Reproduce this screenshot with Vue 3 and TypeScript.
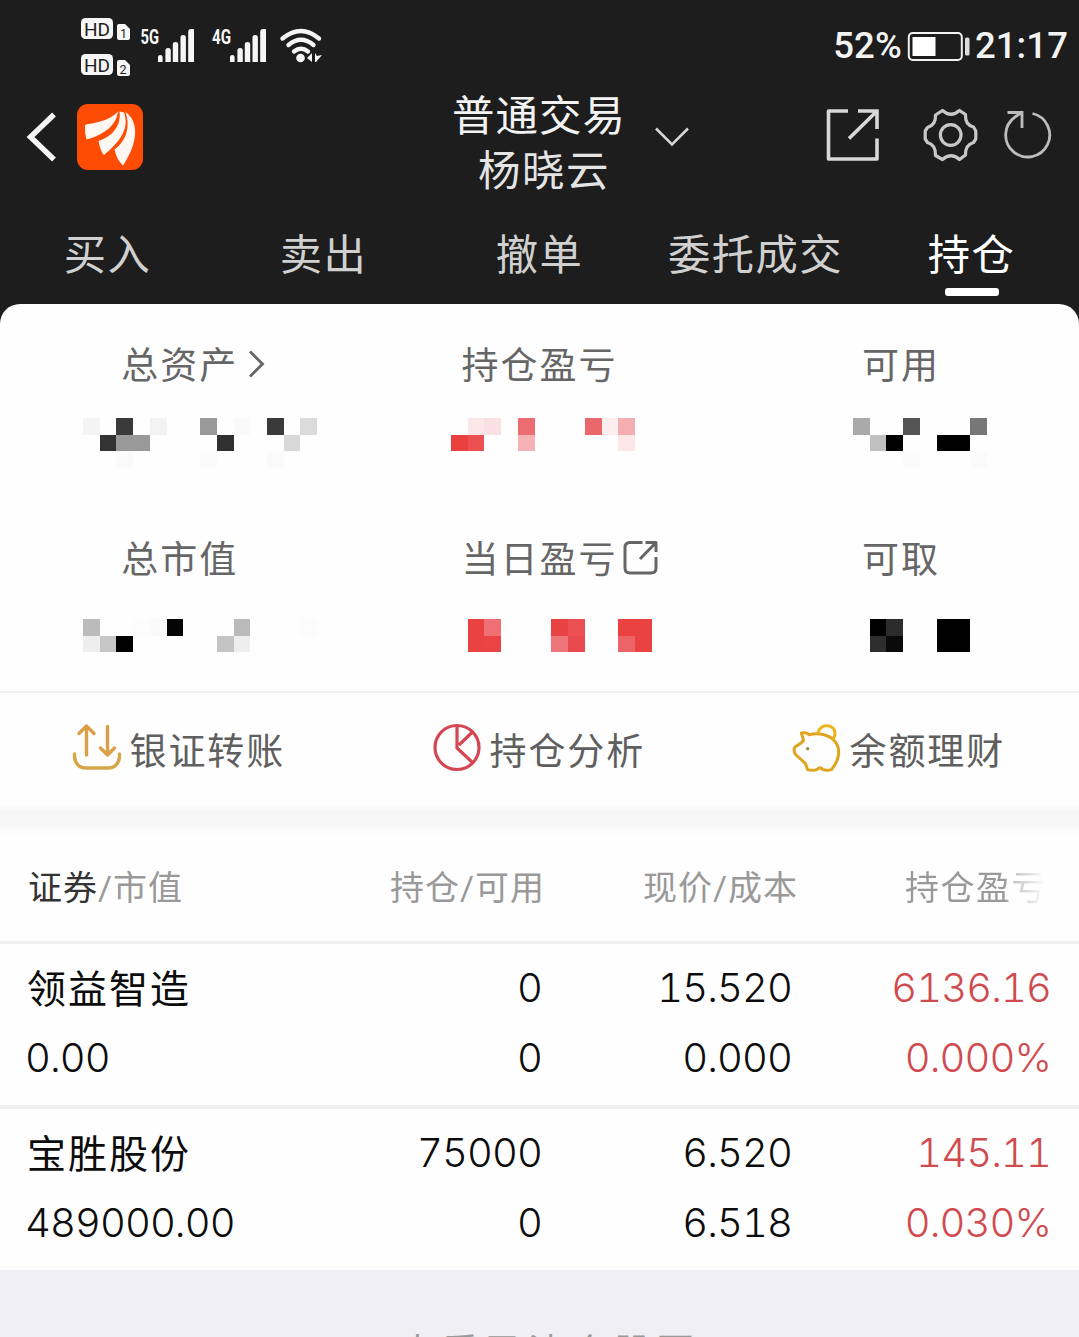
<script setup lang="ts">
interface Cell { x: number; y: number; c: string }
interface Metric { label: string; icon?: 'chevron' | 'share'; cells: Cell[] }
interface Holding { name: string; value: string; held: string; available: string; price: string; cost: string; profit: string; rate: string }

const cells = (spec: string): Cell[] =>
  spec.split(' ').map((item) => {
    const [x, y, c] = item.split(',')
    return { x: Number(x), y: Number(y), c: '#' + c }
  })

const tabs: string[] = ['买入', '卖出', '撤单', '委托成交', '持仓']

const metrics: Metric[] = [
  { label: '总资产', icon: 'chevron', cells: cells('0,0,f4f4f4 2,0,3a3a3a 4,0,f3f3f3 7,0,999999 9,0,fafafa 11,0,3a3a3a 13,0,dbdbdb 1,1,333333 2,1,999999 3,1,999999 8,1,303030 12,1,d8d8d8 2,2,fbfbfb 7,2,fbfbfb 11,2,fbfbfb') },
  { label: '持仓盈亏', cells: cells('1,0,fbe6e8 2,0,fae0e3 4,0,ec6d71 8,0,ea676b 9,0,feeeee 10,0,f4aeb2 0,1,ea4040 1,1,ed5052 4,1,f4b2b4 10,1,fde6e6') },
  { label: '可用', cells: cells('0,0,aaaaaa 3,0,555555 7,0,777777 1,1,c0c0c0 2,1,000000 5,1,000000 6,1,000000 3,2,fbfbfb 7,2,fbfbfb') },
  { label: '总市值', cells: cells('0,0,bbbbbb 3,0,fcfcfc 4,0,fafafa 5,0,050505 9,0,bababa 13,0,fcfcfc 0,1,eeeeee 1,1,c6c6c6 2,1,000000 8,1,c4c4c4 9,1,eeeeee') },
  { label: '当日盈亏', icon: 'share', cells: cells('1,0,ea4141 2,0,ee7075 6,0,e84242 7,0,ec5053 10,0,ea4141 11,0,ea4141 1,1,ea4141 2,1,ea4343 6,1,ed757a 7,1,ea4a4f 10,1,ec6468 11,1,ea4141') },
  { label: '可取', cells: cells('1,0,000000 2,0,2c2c2c 5,0,000000 6,0,000000 1,1,2e2e2e 2,1,0a0a0a 5,1,000000 6,1,000000') },
]

const holdings: Holding[] = [
  { name: '领益智造', value: '0.00', held: '0', available: '0', price: '15.520', cost: '0.000', profit: '6136.16', rate: '0.000%' },
  { name: '宝胜股份', value: '489000.00', held: '75000', available: '0', price: '6.520', cost: '6.518', profit: '145.11', rate: '0.030%' },
]
</script>

<template>
  <div class="screen">
    <header class="top">
      <div class="status">
        <svg class="status-left" width="250" height="70" viewBox="78 12 250 70">
          <g fill="#f6f6f6">
            <rect x="81" y="18" width="32" height="21" rx="4.5" />
            <rect x="81" y="54" width="32" height="21" rx="4.5" />
            <path d="M119 24h6l5 5v9q0 2-2 2h-9q-2 0-2-2V26q0-2 2-2z" />
            <path d="M119 60h6l5 5v9q0 2-2 2h-9q-2 0-2-2V62q0-2 2-2z" />
            <path d="M158 57q0-2 2.300-2t2.300 2v5H158zM165.400 50q0-2 2.700-2t2.700 2v12h-5.400zM172.800 44q0-2 2.700-2t2.700 2v18h-5.400zM180.500 37q0-2 2.700-2t2.700 2v25h-5.400zM188.200 32q0-3 3-3h2.800v33h-5.800z" />
            <path d="M230 57q0-2 2.300-2t2.300 2v5H230zM237.400 50q0-2 2.700-2t2.700 2v12h-5.400zM244.800 44q0-2 2.700-2t2.700 2v18h-5.400zM252.500 37q0-2 2.700-2t2.700 2v25h-5.400zM260.200 32q0-3 3-3h2.800v33h-5.800z" />
            <circle cx="300.500" cy="58" r="4.300" />
            <path d="M312 53v9l-5-4zM315 62V53l2 3 5-1-6 7z" />
          </g>
          <g fill="none" stroke="#f6f6f6" stroke-width="4.400" stroke-linecap="round">
            <path d="M282.500 38.500Q301 23.500 319 38.500" />
            <path d="M288.500 45Q301 34.500 313.500 45" />
            <path d="M294 51.500Q301 46 308 51.500" />
          </g>
          <g class="badge-text">
            <text x="84" y="35.500" font-size="19" textLength="26">HD</text>
            <text x="84" y="71.500" font-size="19" textLength="26">HD</text>
            <text x="120" y="37.500" font-size="12.500">1</text>
            <text x="119.500" y="73.500" font-size="12.500">2</text>
          </g>
          <g class="net-text">
            <text x="140.500" y="43.500" textLength="18.500" lengthAdjust="spacingAndGlyphs">5G</text>
            <text x="212" y="43.500" textLength="19" lengthAdjust="spacingAndGlyphs">4G</text>
          </g>
        </svg>
        <div class="status-right">
          <span>52%</span>
          <svg class="battery" width="64" height="32" viewBox="907 31 64 32">
            <rect x="908.800" y="33" width="53" height="27" rx="4" fill="none" stroke="#f2f2f2" stroke-width="2" />
            <rect x="912.500" y="37" width="23" height="19" fill="#fff" />
            <rect x="965" y="37.500" width="4.500" height="18" rx="1.500" fill="#ddd" />
          </svg>
          <span>21:17</span>
        </div>
      </div>

      <div class="bar">
        <div class="bar-left">
          <svg width="32" height="52" viewBox="26 110.500 32 52" fill="none" stroke="#f5f5f5" stroke-width="5.400">
            <path d="M54 114L30.500 136.500 54 159" />
          </svg>
          <svg width="67" height="67" viewBox="76.500 103.500 67 67">
            <rect x="76.500" y="103.500" width="66" height="66" rx="11" fill="#fe4c05" />
            <g fill="#fff8f2">
              <path d="M84.500 125Q85 123.500 88 123.500C101 121.500 111 118 117.500 111C116 124 105 134 86 139Q84 132 84.500 125z" />
              <path d="M119 111L123.500 112C129 127 121 140 103.500 154.500Q100 151 98 140.500C112 136 121 125 119 111z" />
              <path d="M125 111.500C132 116 135.500 125 134.500 135C133 148 127 158 122.500 165Q116 159 114 149C125 141 130.500 127 125 111.500z" />
            </g>
          </svg>
        </div>
        <div class="account">
          <div class="titles"><span>普通交易</span><span class="user">杨晓云</span></div>
        </div>
        <div class="bar-right">
          <svg class="down" width="36" height="22" viewBox="654 125 36 22" fill="none" stroke="#d5d5d5" stroke-width="2.600"><path d="M656 127.500L672 143.500 688 127.500" /></svg>
          <svg width="56" height="56" viewBox="825 107 56 56" fill="none" stroke="#d8d8d8" stroke-width="3.600">
            <path d="M848 111H828.500V159H877V138.500" stroke-linejoin="round" /><path d="M858 111H877V129M876 112L849 138.500" />
          </svg>
          <svg class="gear" width="56" height="56" viewBox="922 106 56 56" fill="none" stroke="#c8c8c8" stroke-width="3.200" stroke-linejoin="round">
            <path d="M942.500 109.500Q951 117 959.500 109.500L965.500 113.500Q965 124 973.500 126L975.800 130V138L973.500 141.500Q965 144 965.500 154L959.500 158.500Q951 151 942.500 158.500L935.500 154.500Q936 144 927.500 141.500L925.200 138V130L927.500 126.500Q936 124 935.500 114z" />
            <circle cx="950.700" cy="134" r="10.300" />
          </svg>
          <svg width="50" height="52" viewBox="1003 108 50 52" fill="none" stroke="#bdbdbd" stroke-width="2.800">
            <path d="M1032.500 112.500A22 22 0 1 1 1015 116L1021 112" /><path d="M1007.500 111.500H1022V127" />
          </svg>
        </div>
      </div>

      <nav class="tabs">
        <div v-for="(t, i) in tabs" :key="t" class="tab" :class="{ active: i === 4 }">{{ t }}</div>
      </nav>
    </header>

    <section class="panel">
      <div class="metrics">
        <div v-for="m in metrics" :key="m.label" class="metric">
          <div class="label">
            <span>{{ m.label }}</span>
            <svg v-if="m.icon === 'chevron'" class="chev" width="18" height="30" viewBox="0 0 18 30"><path d="M2 2.500L14.500 15 2 27.500" /></svg>
            <svg v-if="m.icon === 'share'" class="share" width="36" height="36" viewBox="0 0 36 36"><path d="M19.500 2.500H7Q2 2.500 2 7.500V28Q2 33 7 33H28Q33 33 33 28V17M22.500 2.500H33V12M32.500 3L17 19" /></svg>
          </div>
          <svg class="mosaic" width="250.950" height="50.190" viewBox="0 0 15 3" shape-rendering="crispEdges">
            <rect v-for="(c, i) in m.cells" :key="i" :x="c.x" :y="c.y" width="1" height="1" :fill="c.c" />
          </svg>
        </div>
      </div>
      <div class="actions">
        <div class="action">
          <svg width="52" height="52" viewBox="71 722 52 52" fill="none" stroke="#dba047" stroke-width="3.400" stroke-linecap="round" stroke-linejoin="round">
            <path d="M86.500 755V726M79 733.500L86.500 726 94 733.500M107.500 726.500V754M100.500 748L107.500 755 114.500 748" />
            <path d="M74.500 754V757Q76 768 86 768H108Q118 768 119.500 757V754" stroke="#d6a648" />
          </svg><span>银证转账</span>
        </div>
        <div class="action">
          <svg width="52" height="52" viewBox="431 722 52 52" fill="none" stroke="#d44752" stroke-width="3.200">
            <circle cx="457" cy="747.500" r="22" /><path d="M457 725.500V748L473 763M459 745L473 731.500" />
          </svg><span>持仓分析</span>
        </div>
        <div class="action">
          <svg width="52" height="52" viewBox="303 125 156 156" fill="none" stroke="#dfa51f" stroke-width="9" stroke-linejoin="round" stroke-linecap="round">
            <path d="M334 158Q350 155 357 163C385 157 416 162 433 181C456 207 446 242 424 268Q410 272 397 267Q390 257 382 267Q368 272 353 268L346 249L318 224Q308 212 315 200L333 188L341 180z" />
            <path d="M384 157Q391 135 411 136C434 137 440 158 431 174" stroke="#edb51b" /><circle cx="353" cy="205" r="3" fill="#8f9440" stroke="#8f9440" stroke-width="4" />
          </svg><span>余额理财</span>
        </div>
      </div>
    </section>

    <div class="band"></div>

    <section class="table">
      <div class="thead">
        <div class="first"><b>证券</b>/市值</div>
        <div>持仓/可用</div>
        <div>现价/成本</div>
        <div class="faded">持仓盈亏</div>
      </div>
      <div v-for="h in holdings" :key="h.name" class="row">
        <div class="line">
          <span class="name">{{ h.name }}</span><span>{{ h.held }}</span><span>{{ h.price }}</span><span class="up">{{ h.profit }}</span>
        </div>
        <div class="line">
          <span>{{ h.value }}</span><span>{{ h.available }}</span><span>{{ h.cost }}</span><span class="up">{{ h.rate }}</span>
        </div>
      </div>
    </section>
    <footer class="foot"><span>查看已清仓股票</span></footer>
  </div>
</template>

<style>
body { overflow: hidden; }
</style>

<style scoped>
.screen { width: 1079px; height: 1337px; overflow: hidden; display: flex; flex-direction: column; background: #1d1d1d; font-family: Roboto, "Noto Sans CJK SC", sans-serif; }
.top { height: 304px; flex: none; color: #f3f3f3; }
.status { height: 82px; display: flex; justify-content: space-between; padding: 12px 11px 0 78px; box-sizing: border-box; }
.status-left { flex: none; }
.badge-text { fill: #1d1d1d; font-family: Roboto, sans-serif; }
.net-text { fill: #f6f6f6; font: 700 20px Roboto, sans-serif; }
.status-right { display: flex; align-items: center; height: 67px; font-size: 36.500px; font-weight: 500; letter-spacing: 0.100px; }
.battery { margin: 2px 4px 0 5px; }
.bar { height: 128px; display: grid; grid-template-columns: 400px 278px 1fr; }
.bar-left { display: flex; align-items: center; gap: 18.500px; padding: 0 0 18px 26px; }
.account { display: flex; justify-content: center; }
.titles { display: flex; flex-direction: column; align-items: center; font-size: 42.500px; letter-spacing: 1px; line-height: 56px; padding-top: 7px; }
.user { color: #e4e4e4; margin: -1px 0 0 10px; letter-spacing: 1.500px; }
.bar-right { display: flex; align-items: center; padding-bottom: 22px; margin-left: -24px; }
.bar-right svg { flex: none; }
.down { margin: 4px 135px 0 0; }
.gear { margin: 0 25px 0 41px; }
.tabs { display: grid; grid-template-columns: repeat(5, 216px); height: 94px; margin-left: -1px; }
.tab { display: flex; flex-direction: column; align-items: center; font-size: 42.300px; letter-spacing: 1.500px; line-height: 91px; height: 94px; padding-left: 1px; color: #d0d0d0; }
.tab.active { color: #fff; }
.tab.active::after { content: ""; width: 54px; height: 8px; border-radius: 3px; background: #fff; margin-top: -13px; flex: none; }
.panel { height: 501px; flex: none; background: #fefefe; border-radius: 20px 20px 0 0; }
.metrics { height: 389px; box-sizing: border-box; display: grid; grid-template-columns: 368.100px 401.500px 1fr; grid-template-rows: 200.800px 1fr; padding: 34px 0 0 83.300px; border-bottom: 2px solid #f1f1f1; }
.metric:nth-child(3n + 1) .label { margin-left: 38px; }
.metric:nth-child(3n + 2) .label { margin-left: 10px; }
.metric:nth-child(3n) .label { margin-left: 9px; }
.metric:nth-child(n + 4) .label { margin-top: -7px; height: 87px; }
.label { display: flex; height: 80px; font-size: 37px; letter-spacing: 2px; line-height: 57px; color: #666; }
.chev, .share { fill: none; stroke: #666; flex: none; }
.chev { stroke-width: 2.800; margin: 11px 0 0 10px; }
.share { stroke-width: 3; stroke-linejoin: round; margin: 8px 0 0 6px; }
.mosaic { display: block; }
.actions { display: grid; grid-template-columns: repeat(3, 360px); height: 112px; }
.action { display: flex; align-items: center; padding: 0 0 3px 71px; font-size: 37px; letter-spacing: 1.900px; color: #5f5f5f; }
.action span { margin: 10px 0 0 6.500px; line-height: 50px; white-space: nowrap; }
.band { height: 30px; flex: none; background: linear-gradient(#fdfdfd, #f6f6f6 25%, #f7f7f7 60%, #fefefe); }
.table { background: #fefefe; flex: none; height: 435px; }
.thead, .line { display: grid; grid-template-columns: 343px 200px 250px 258px; text-align: right; }
.thead { height: 106px; grid-template-columns: 343px 202px 253px 1fr; font-size: 34px; letter-spacing: 1px; line-height: 106px; color: #999; border-bottom: 3px solid #efefef; }
.thead .first { text-align: left; padding-left: 28px; }
.thead b { font-weight: 400; color: #333; }
.thead .faded { text-align: left; padding-left: 107px; letter-spacing: 1.500px; white-space: nowrap; color: transparent; background: linear-gradient(90deg, #999 206px, #c4c4c4 216px, #fefefe 248px); background-clip: text; }
.row { padding: 9px 0 13px; height: 139px; border-bottom: 4px solid #f0f0f0; }
.row:last-child { border: 0; }
.line { height: 70px; font-family: Inter, "Noto Sans CJK SC", sans-serif; font-size: 40px; font-weight: 350; font-variant-numeric: tabular-nums; letter-spacing: -0.900px; line-height: 70px; color: #0c0c0c; }
.line span:not(:first-child) { padding-right: 1px; }
.line span.up { padding-right: 0; }
.line span:first-child { text-align: left; padding-left: 25px; white-space: nowrap; }
.line span.name { font-family: "Noto Sans CJK SC", sans-serif; font-size: 39px; font-weight: 400; letter-spacing: 2px; line-height: 66px; padding-left: 27px; }
.line .up { color: #d04b4f; }
.foot { flex: 1; background: #f0f0f4; display: flex; justify-content: center; color: #999; font-size: 37px; letter-spacing: 6px; line-height: 54px; padding-top: 57px; }
.foot span { margin-left: 20px; }
</style>
